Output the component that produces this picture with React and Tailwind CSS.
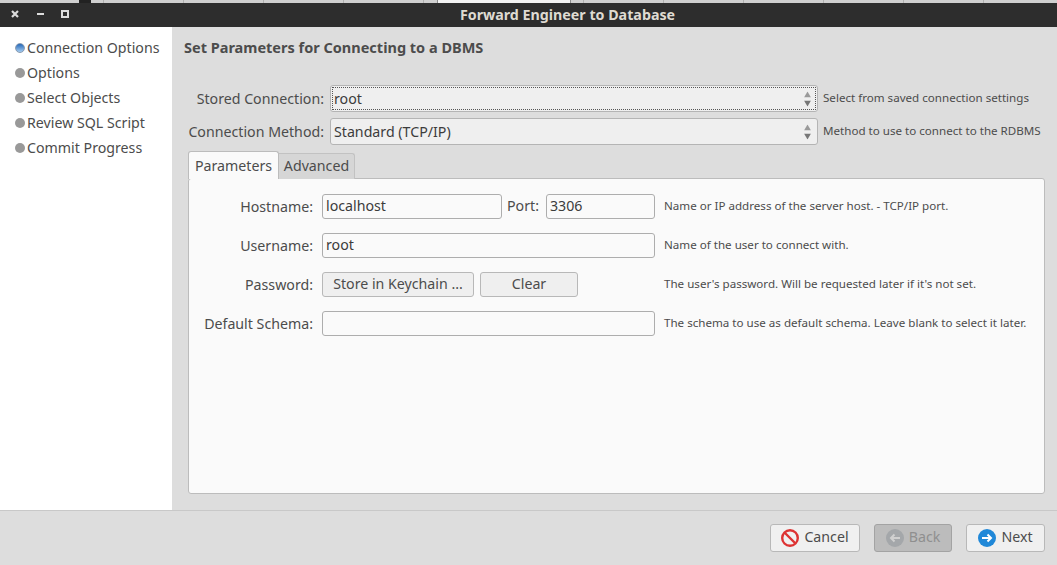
import React from "react";

const font = "font-['Noto_Sans','Open_Sans',sans-serif]";
const ticks = [0, 1, 2, 3, 4, 5, 6, 7, 8, 9, 10, 11, 12, 13];

function Stepper() {
  return (
    <div className="absolute right-[6px] top-1/2 -translate-y-1/2 flex flex-col gap-[3px]">
      <svg width="7" height="6" viewBox="0 0 7 6"><path d="M3.500 0L7 6H0z" fill="#9a9a9a" /></svg>
      <svg width="7" height="6" viewBox="0 0 7 6"><path d="M0 0h7L3.500 6z" fill="#777" /></svg>
    </div>
  );
}

function Select({ value, focused }) {
  return (
    <div className="relative h-[27px] w-[488px] rounded-[3px] border border-[#b4b4b4] bg-[#efefef] p-[1px]">
      <div className={`h-full pl-[1px] leading-[22px] text-[#3c3c3c] ${focused ? "border border-dotted border-[#555]" : "border border-transparent"}`}>
        {value}
      </div>
      <Stepper />
    </div>
  );
}

function Step({ label, active }) {
  return (
    <div className="flex h-[25px] items-center">
      {active ? (
        <span className="h-[10px] w-[10px] rounded-full border border-[#8a9bb0] bg-gradient-to-b from-[#2468b8] to-[#a4ccf0]" />
      ) : (
        <span className="h-[10px] w-[10px] rounded-full bg-[#999999]" />
      )}
      <span className="ml-[2px] text-[#4c4c4c]">{label}</span>
    </div>
  );
}

function Field({ value, className }) {
  return (
    <div className={`h-[25px] rounded-[3px] border border-[#adadad] bg-[#fafafa] pl-[3px] leading-[22px] text-[#3c3c3c] ${className}`}>
      {value}
    </div>
  );
}

function Row({ label, hint, children }) {
  return (
    <div className="flex h-[25px] items-center">
      <div className="w-[133px] pr-[9px] text-right text-[#4c4c4c]">{label}</div>
      <div className="flex w-[342px] items-center">{children}</div>
      <div className="-mt-[1px] whitespace-nowrap text-[11.6px] text-[#4c4c4c]">{hint}</div>
    </div>
  );
}

function FootButton({ icon, label, disabled, className }) {
  return (
    <button className={`flex h-[28px] items-center justify-center rounded-[3px] border ${disabled ? "border-[#a3a3a3] bg-[#bcbcbc] text-[#8f8f8f]" : "border-[#b8b8b8] bg-[#f0f0f0] text-[#4c4c4c]"} ${className}`}>
      {icon}
      <span className="-mt-[2px] ml-[5px]">{label}</span>
    </button>
  );
}

export default function App() {
  return (
    <div className={`flex h-[565px] w-[1057px] flex-col overflow-hidden bg-[#dddddd] text-[14.2px] ${font}`}>
      {/* bit of the window behind */}
      <div className="relative flex h-[3px] bg-[#cfcfcf] pl-[24px]">
        {ticks.map((t) => (
          <div key={t} className="h-[3px] w-[80px] shrink-0 border-r border-[#b0b0b0]" />
        ))}
        <div className="absolute left-[79px] top-0 h-[3px] w-[12px] bg-[#222]" />
        <div className="absolute left-[437px] top-0 h-[3px] w-[134px] border-x border-[#8a8a8a] bg-[#f2f2f2]" />
      </div>

      {/* title bar */}
      <div className="relative flex h-[24px] items-center justify-center bg-[#2d2d2d]">
        <div className="absolute left-[10px] top-[6px] flex items-center">
          <svg width="10" height="10" viewBox="0 0 10 10"><path d="M2 2l6 6M8 2l-6 6" stroke="#dcdcdc" strokeWidth="2.2" /></svg>
          <svg className="ml-[17px]" width="8" height="10" viewBox="0 0 8 10"><path d="M0 5h7" stroke="#dcdcdc" strokeWidth="2" /></svg>
          <svg className="ml-[16px]" width="8" height="10" viewBox="0 0 8 10"><rect x="1" y="2" width="6" height="6" fill="none" stroke="#dcdcdc" strokeWidth="2" /></svg>
        </div>
        <span className="ml-[78px] text-[14.25px] font-bold text-[#dfdbd2]">Forward Engineer to Database</span>
      </div>

      <div className="flex flex-1">
        {/* steps sidebar */}
        <div className="w-[172px] bg-white pl-[15px] pt-[8px]">
          <Step label="Connection Options" active />
          <Step label="Options" />
          <Step label="Select Objects" />
          <Step label="Review SQL Script" />
          <Step label="Commit Progress" />
        </div>

        <div className="flex-1 pl-[12px] pr-[12px]">
          <div className="pt-[8px] pb-[1px] text-[14.5px] font-bold leading-[24px] text-[#4c4c4c]">Set Parameters for Connecting to a DBMS</div>

          <div className="mt-[25px] flex h-[27px] items-center">
            <div className="w-[146px] pr-[6px] text-right text-[#4c4c4c]">Stored Connection:</div>
            <Select value="root" focused />
            <div className="ml-[5px] -mt-[1px] whitespace-nowrap text-[11.6px] text-[#4c4c4c]">Select from saved connection settings</div>
          </div>
          <div className="mt-[6px] flex h-[27px] items-center">
            <div className="w-[146px] pr-[6px] text-right text-[#4c4c4c]">Connection Method:</div>
            <Select value="Standard (TCP/IP)" />
            <div className="ml-[5px] -mt-[1px] whitespace-nowrap text-[11.6px] text-[#4c4c4c]">Method to use to connect to the RDBMS</div>
          </div>

          {/* tabs */}
          <div className="relative z-10 mt-[5px] flex h-[29px] items-end pl-[4px]">
            <div className="h-[28px] w-[91px] rounded-t-[3px] border border-b-0 border-[#bcbcbc] bg-[#fafafa] text-center leading-[27px] text-[#4c4c4c]">Parameters</div>
            <div className="h-[26px] w-[76px] rounded-tr-[3px] border border-l-0 border-b-0 border-[#c2c2c2] bg-[#d6d6d6] text-center leading-[24px] text-[#4c4c4c]">Advanced</div>
          </div>
          <div className="-mt-[1px] ml-[4px] flex h-[316px] flex-col gap-[14px] rounded-[3px] border border-[#bcbcbc] bg-[#fafafa] pt-[15px]">
            <Row label="Hostname:" hint="Name or IP address of the server host. - TCP/IP port.">
              <Field value="localhost" className="w-[180px]" />
              <span className="ml-[5px] -mt-[1px] w-[34px] text-[#4c4c4c]">Port:</span>
              <Field value="3306" className="ml-[5px] w-[109px]" />
            </Row>
            <Row label="Username:" hint="Name of the user to connect with.">
              <Field value="root" className="w-[333px]" />
            </Row>
            <Row label="Password:" hint="The user's password. Will be requested later if it's not set.">
              <button className="h-[25px] w-[152px] rounded-[3px] border border-[#b8b8b8] bg-[#efefef] pb-[1px] text-[#4c4c4c]">Store in Keychain ...</button>
              <button className="ml-[6px] h-[25px] w-[98px] rounded-[3px] border border-[#b8b8b8] bg-[#efefef] pb-[1px] text-[#4c4c4c]">Clear</button>
            </Row>
            <Row label="Default Schema:" hint="The schema to use as default schema. Leave blank to select it later.">
              <Field value="" className="w-[333px]" />
            </Row>
          </div>
        </div>
      </div>

      {/* footer */}
      <div className="flex h-[55px] items-start justify-end border-t border-[#c8c8c8] bg-[#dddddd] pr-[12px] pt-[13px]">
        <FootButton
          label="Cancel"
          className="w-[90px]"
          icon={<svg width="18" height="18" viewBox="0 0 18 18"><circle cx="9" cy="9" r="7.800" fill="none" stroke="#dd3333" strokeWidth="2.400" /><path d="M4 4l10 10" stroke="#dd3333" strokeWidth="2.400" /></svg>}
        />
        <FootButton
          label="Back"
          disabled
          className="ml-[14px] w-[78px]"
          icon={<svg width="18" height="18" viewBox="0 0 18 18"><circle cx="9" cy="9" r="9" fill="#a4a7aa" /><path d="M14 9H5M8.500 5.500L5 9l3.500 3.500" fill="none" stroke="#d0d0d0" strokeWidth="2" /></svg>}
        />
        <FootButton
          label="Next"
          className="ml-[14px] w-[79px]"
          icon={<svg width="18" height="18" viewBox="0 0 18 18"><circle cx="9" cy="9" r="9" fill="#2088d8" /><path d="M4 9h9M9.500 5.500L13 9l-3.500 3.500" fill="none" stroke="#fff" strokeWidth="2" /></svg>}
        />
      </div>
    </div>
  );
}
